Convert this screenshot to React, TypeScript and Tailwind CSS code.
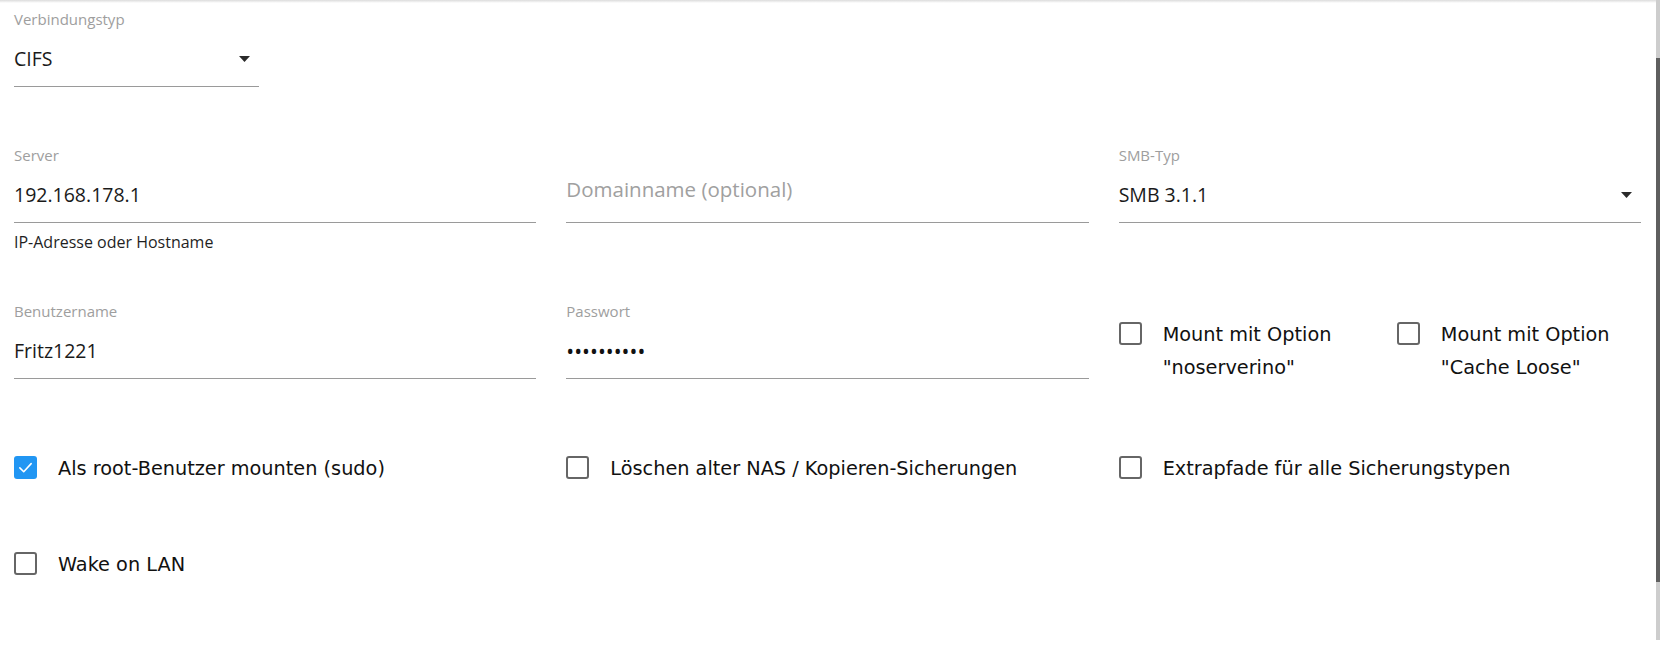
import React from "react";

const inputFont = { fontFamily: '"Open Sans", "Noto Sans", sans-serif' };

function Arrow() {
  return (
    <svg width="11" height="6" viewBox="0 0 11 6" className="mr-[9px] shrink-0">
      <path d="M0 0 L11 0 L5.5 6 Z" fill="#2a2a2a" />
    </svg>
  );
}

function Checkbox({ label, checked }: { label: React.ReactNode; checked?: boolean }) {
  return (
    <div className="flex items-start gap-[21px]">
      {checked ? (
        <div className="mt-[4px] flex h-[23px] w-[23px] shrink-0 items-center justify-center rounded-[3px] bg-[#2196f3]">
          <svg width="17" height="17" viewBox="0 0 24 24" fill="none">
            <path d="M4 12.5 L9.5 18 L20 6.5" stroke="white" strokeWidth="2.2" strokeLinecap="round" strokeLinejoin="round" />
          </svg>
        </div>
      ) : (
        <div className="mt-[4px] h-[23px] w-[23px] shrink-0 rounded-[3px] border-2 border-[#666666]" />
      )}
      <div
        className="text-[19.3px] leading-[33px] text-[#111111]"
        style={{ fontFamily: '"DejaVu Sans", "Liberation Sans", sans-serif' }}
      >
        {label}
      </div>
    </div>
  );
}

function TextField({
  label,
  value,
  placeholder,
  select,
  hint,
  password,
}: {
  label?: string;
  value?: string;
  placeholder?: string;
  select?: boolean;
  hint?: string;
  password?: boolean;
}) {
  return (
    <div style={inputFont}>
      <div className="h-[20px] text-[15px] leading-[20px] text-[#9e9e9e]">{label ?? ""}</div>
      <div className="mt-[16px] flex h-[28px] items-center justify-between">
        {placeholder ? (
          <span className="pb-[12px] text-[20.5px] leading-[28px] text-[#a0a0a0]">{placeholder}</span>
        ) : password ? (
          <span
            className="text-[21px] leading-[28px] text-[#111111]"
            style={{ fontFamily: '"Open Sans", sans-serif' }}
          >
            {value}
          </span>
        ) : (
          <span className="text-[19.5px] leading-[28px] text-[#1a1a1a]">{value}</span>
        )}
        {select && <Arrow />}
      </div>
      <div className="mt-[13px] h-px bg-[#9a9a9a]" />
      {hint && <div className="mt-[9px] text-[16px] leading-[20px] text-[#1f1f1f]">{hint}</div>}
    </div>
  );
}

export default function App() {
  return (
    <div className="relative h-[666px] w-full overflow-hidden bg-white">
      <div className="pointer-events-none absolute inset-x-0 top-0 h-[3px] bg-gradient-to-b from-[#dcdcdc] to-white" />
      <div className="pointer-events-none absolute right-0 top-0 h-[640px] w-[4px] bg-[#cdcdcd]">
        <div className="mt-[58px] h-[524px] w-full bg-[#5f5f5f]" />
      </div>

      <div className="pl-[14px] pr-[19px] pt-[9px]">
        {/* Row A */}
        <div className="w-[245px]">
          <div style={inputFont}>
            <div className="h-[20px] text-[15px] leading-[20px] text-[#9e9e9e]">Verbindungstyp</div>
            <div className="mt-[16px] flex h-[28px] items-center justify-between">
              <span className="text-[19.5px] leading-[28px] text-[#1a1a1a]">CIFS</span>
              <Arrow />
            </div>
            <div className="mt-[13px] h-px bg-[#9a9a9a]" />
          </div>
        </div>

        {/* Row B */}
        <div className="mt-[58px] grid grid-cols-3 gap-x-[30px]">
          <TextField label="Server" value="192.168.178.1" hint="IP-Adresse oder Hostname" />
          <TextField placeholder="Domainname (optional)" />
          <TextField label="SMB-Typ" value="SMB 3.1.1" select />
        </div>

        {/* Row C */}
        <div className="mt-[49px] grid grid-cols-3 gap-x-[30px]">
          <TextField label="Benutzername" value="Fritz1221" />
          <TextField label="Passwort" value="••••••••••" password />
          <div className="grid grid-cols-2 gap-x-[34px] pt-[17px]">
            <Checkbox label={<>Mount mit Option "noserverino"</>} />
            <Checkbox label={<>Mount mit Option "Cache Loose"</>} />
          </div>
        </div>

        {/* Row D */}
        <div className="mt-[68px] grid grid-cols-3 gap-x-[30px]">
          <Checkbox checked label="Als root-Benutzer mounten (sudo)" />
          <Checkbox label="Löschen alter NAS / Kopieren-Sicherungen" />
          <Checkbox label="Extrapfade für alle Sicherungstypen" />
        </div>

        {/* Row E */}
        <div className="mt-[63px] grid grid-cols-3 gap-x-[30px]">
          <Checkbox label="Wake on LAN" />
        </div>
      </div>
    </div>
  );
}
